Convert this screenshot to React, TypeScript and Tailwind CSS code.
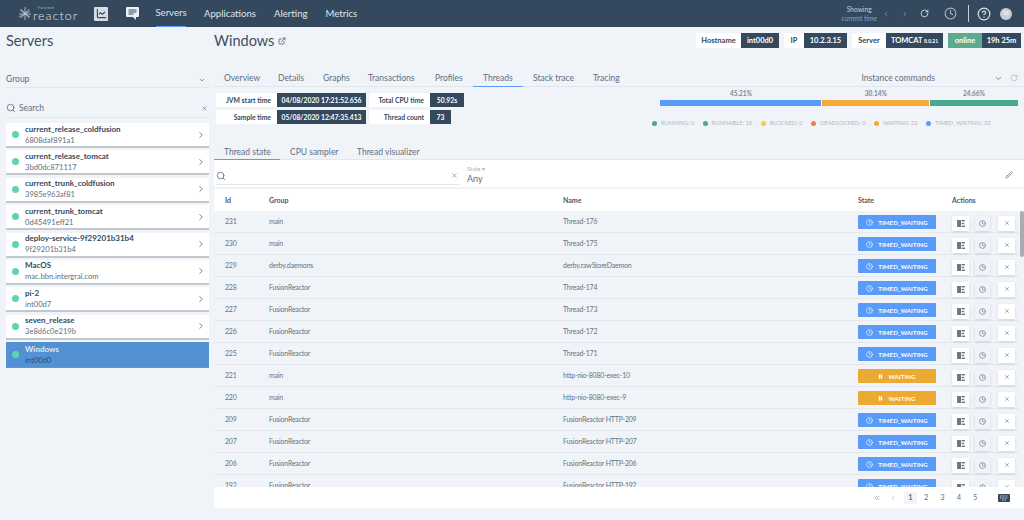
import React from 'react';
import {
  ChevronDown, ChevronLeft, ChevronRight, ChevronsLeft, Clock, ExternalLink, HelpCircle,
  Pause, RotateCw, Search, X, Brush, LineChart,
} from 'lucide-react';

const servers = [
  { name: 'current_release_coldfusion', id: '6808daf891a1' },
  { name: 'current_release_tomcat', id: '3bd0dc871117' },
  { name: 'current_trunk_coldfusion', id: '3985e963af81' },
  { name: 'current_trunk_tomcat', id: '0d45491eff21' },
  { name: 'deploy-service-9f29201b31b4', id: '9f29201b31b4' },
  { name: 'MacOS', id: 'mac.bbn.intergral.com' },
  { name: 'pi-2', id: 'int00d7' },
  { name: 'seven_release', id: '3e8d6c0e219b' },
];

const rows = [
  ['231', 'main', 'Thread-176', 'T'],
  ['230', 'main', 'Thread-175', 'T'],
  ['229', 'derby.daemons', 'derby.rawStoreDaemon', 'T'],
  ['228', 'FusionReactor', 'Thread-174', 'T'],
  ['227', 'FusionReactor', 'Thread-173', 'T'],
  ['226', 'FusionReactor', 'Thread-172', 'T'],
  ['225', 'FusionReactor', 'Thread-171', 'T'],
  ['221', 'main', 'http-nio-8080-exec-10', 'W'],
  ['220', 'main', 'http-nio-8080-exec-9', 'W'],
  ['209', 'FusionReactor', 'FusionReactor HTTP-209', 'T'],
  ['207', 'FusionReactor', 'FusionReactor HTTP-207', 'T'],
  ['206', 'FusionReactor', 'FusionReactor HTTP-206', 'T'],
  ['192', 'FusionReactor', 'FusionReactor HTTP-192', 'T'],
];

const legend = [
  ['RUNNING: 0', 'bg-[#46ab8c]'],
  ['RUNNABLE: 18', 'bg-[#46ab8c]'],
  ['BLOCKED: 0', 'bg-[#f7d038]'],
  ['DEADLOCKED: 0', 'bg-[#f07f4f]'],
  ['WAITING: 22', 'bg-[#f5a937]'],
  ['TIMED_WAITING: 33', 'bg-[#5b9bf8]'],
];

const mainTabs = [
  { label: 'Overview', cls: 'w-[64px] pl-[10px]' },
  { label: 'Details', cls: 'w-[45px]' },
  { label: 'Graphs', cls: 'w-[45px]' },
  { label: 'Transactions', cls: 'w-[67px]' },
  { label: 'Profiles', cls: 'w-[37px]' },
  { label: 'Threads', cls: 'ml-[1px] w-[50px] pl-[10px] border-b border-[#5b9bf8]' },
  { label: 'Stack trace', cls: 'ml-[10px] w-[60px]' },
  { label: 'Tracing', cls: 'w-[40px]' },
];

function Chip({ label, value, labelW, valueW }: { label: string; value: React.ReactNode; labelW: string; valueW: string }) {
  return (
    <div className="flex h-[15px] whitespace-nowrap text-[7.5px] font-bold leading-[15px]">
      <div className={`bg-white text-center text-[#34495e] ${labelW}`}>{label}</div>
      <div className={`bg-[#34495e] text-center text-white ${valueW}`}>{value}</div>
    </div>
  );
}

function Stat({ label, value, labelW, valueW }: { label: string; value: string; labelW: string; valueW: string }) {
  return (
    <div className="flex h-[14px] whitespace-nowrap text-[6.8px] font-bold leading-[14px]">
      <div className={`bg-white pr-[6px] text-right text-[#34495e] ${labelW}`}>{label}</div>
      <div className={`bg-[#34495e] text-center text-white ${valueW}`}>{value}</div>
    </div>
  );
}

function BarsIcon() {
  return (
    <svg width="8" height="7" viewBox="0 0 9 8" className="text-[#6a7686]" fill="currentColor">
      <rect x="0" y="0" width="4.5" height="8" />
      <rect x="5.2" y="0" width="3.8" height="1.6" />
      <rect x="5.2" y="3.2" width="3" height="1.6" />
      <rect x="5.2" y="6.4" width="3.8" height="1.6" />
    </svg>
  );
}

function ThreadRow({ row }: { row: string[] }) {
  const timed = row[3] === 'T';
  return (
    <div className="flex h-[22px] shrink-0 items-center whitespace-nowrap border-b border-[#e2e7ee] text-[7px] tracking-[-0.2px] text-[#68737f]">
      <div className="w-[55px] pl-[11px]">{row[0]}</div>
      <div className="w-[294px]">{row[1]}</div>
      <div className="w-[295px]">{row[2]}</div>
      <div
        className={`mt-px flex h-[14px] w-[78px] items-center justify-center gap-[5px] rounded-[1px] text-[6px] font-bold tracking-[0.1px] text-white ${
          timed ? 'bg-[#5b9bf8]' : 'bg-[#ecaa35]'
        }`}
      >
        {timed ? <Clock size={7} /> : <Pause size={5} fill="currentColor" />}
        {timed ? 'TIMED_WAITING' : 'WAITING'}
      </div>
      <div className="ml-[16px] mt-[3px] flex h-[15px] w-[17px] items-center justify-center bg-white shadow-sm">
        <BarsIcon />
      </div>
      <div className="ml-[6px] mt-[3px] flex h-[15px] w-[15px] items-center justify-center bg-[#f0f3f8] shadow-sm">
        <Clock size={7} className="text-[#5a6878]" />
      </div>
      <div className="ml-[8px] mt-[3px] flex h-[15px] w-[17px] items-center justify-center bg-white shadow-sm">
        <X size={6} className="text-[#5a6878]" />
      </div>
    </div>
  );
}

export default function App() {
  return (
    <div className="flex h-[520px] w-[1024px] flex-col overflow-hidden bg-[#f0f3f8] text-[#34495e] [font-family:Lato,sans-serif]">
      <header className="flex h-[27px] shrink-0 items-center bg-[#34495e] text-white">
        <div className="ml-[17px] flex w-[62px] items-center">
          <svg width="15" height="15" viewBox="0 0 15 15" className="shrink-0 text-[#c5ced8]" stroke="currentColor" strokeWidth="0.8">
            <path d="M8 1v13M2 8h12M4 3l8 9M12 3l-8 9M2 11l11-6M3 4l10 7" />
          </svg>
          <div className="ml-[1px] flex flex-col leading-none">
            <span className="ml-[5px] text-[4px] leading-[4px] tracking-[1px] text-[#c5ced8]">fusion</span>
            <span className="text-[12.5px] font-light leading-[11px] tracking-[1px] text-[#dfe5ea]">reactor</span>
          </div>
        </div>
        <div className="ml-[15px] flex h-[14px] w-[14px] items-center justify-center rounded-[1px] bg-[#d5dce4]">
          <LineChart size={11} strokeWidth={2.5} className="text-[#34495e]" />
        </div>
        <svg width="13" height="13" viewBox="0 0 13 13" className="ml-[18px] text-[#eef1f4]">
          <path d="M1 0h11a1 1 0 0 1 1 1v8a1 1 0 0 1-1 1h-2v3l-3-3H1a1 1 0 0 1-1-1V1a1 1 0 0 1 1-1z" fill="currentColor" />
          <path d="M2.5 3h8M2.5 5h8M2.5 7h5" stroke="#34495e" strokeWidth="1" />
        </svg>
        <nav className="ml-[17px] flex h-full items-center whitespace-nowrap pt-px text-[9.6px] text-[#dfe5ea]">
          <div className="flex h-full w-[30px] items-center justify-center border-b border-[#5b9bf8]">Servers</div>
          <div className="ml-[18px]">Applications</div>
          <div className="ml-[18px]">Alerting</div>
          <div className="ml-[18px]">Metrics</div>
        </nav>
        <div className="ml-auto flex items-center">
          <div className="flex flex-col items-center text-[6.6px] leading-[9px]">
            <span className="text-[#c5ced8]">Showing</span>
            <span className="text-[#8fa0b1]">current time</span>
          </div>
          <ChevronLeft size={8} className="ml-[5px] text-[#8fa0b1]" />
          <ChevronRight size={8} className="ml-[11px] text-[#8fa0b1]" />
          <RotateCw size={9} className="ml-[11px] text-[#eef1f4]" />
          <Clock size={13} className="ml-[15px] text-[#a9b5c1]" />
          <div className="ml-[11px] h-[17px] w-px bg-[#c5ced8]" />
          <HelpCircle size={14} className="ml-[8px] text-[#dfe5ea]" />
          <div className="ml-[9px] mr-[12px] flex h-[12px] w-[12px] items-center justify-center rounded-full bg-[#c8ced5] text-[5px] text-white">SS</div>
        </div>
      </header>

      <div className="flex min-h-0 flex-1 pl-[6px]">
        <aside className="w-[203px] shrink-0">
          <h1 className="mt-[4px] h-[20px] text-[14.5px] leading-[20px] text-[#3e5064]">Servers</h1>
          <div className="mt-[24px] flex h-[13px] items-center justify-between border-b border-[#e2e7ee] pb-[3px] pr-[3px] text-[8.5px] text-[#5f6f80]">
            Group
            <ChevronDown size={8} />
          </div>
          <div className="mt-[14px] flex h-[16px] items-center border-b border-[#e2e7ee] pb-[3px] pr-[1px] text-[8.5px] text-[#5f6f80]">
            <Search size={10} />
            <span className="ml-[3px]">Search</span>
            <X size={7} className="ml-auto" />
          </div>
          <div className="mt-[5px] flex flex-col">
            {servers.map((s) => (
              <div key={s.id} className="mb-[2.4px] flex h-[25px] items-center border-b-2 border-[#c3c8ce] bg-white">
                <span className="ml-[6px] h-[7px] w-[7px] rounded-full bg-[#5fd4ae]" />
                <div className="ml-[6px] flex-1 leading-[11px]">
                  <div className="text-[8px] font-bold text-[#34495e]">{s.name}</div>
                  <div className="text-[7.6px] text-[#5f6f80]">{s.id}</div>
                </div>
                <ChevronRight size={10} className="mr-[3px] text-[#5f6f80]" />
              </div>
            ))}
            <div className="flex h-[26px] items-center border-b border-[#7b8fa5] bg-[#5292d3]">
              <span className="ml-[6px] h-[7px] w-[7px] rounded-full bg-[#5fd4ae]" />
              <div className="ml-[6px] flex-1 leading-[11px]">
                <div className="text-[8px] font-bold text-[#dfe9f5]">Windows</div>
                <div className="text-[7.6px] text-[#34495e]">int00d0</div>
              </div>
            </div>
          </div>
        </aside>

        <main className="ml-[5px] flex min-w-0 flex-1 flex-col">
          <div className="flex h-[21px] items-end justify-between">
            <div className="-mb-[3px] flex items-center">
              <span className="text-[14.5px] leading-[20px] text-[#3e5064]">Windows</span>
              <ExternalLink size={8} className="ml-[4px]" />
            </div>
            <div className="mr-[3px] flex items-center gap-[5px]">
              <Chip label="Hostname" value="int00d0" labelW="w-[45px]" valueW="w-[38px]" />
              <Chip label="IP" value="10.2.3.15" labelW="w-[20px]" valueW="w-[43px]" />
              <Chip label="Server" value={<>TOMCAT <span className="text-[5px]">8.0.21</span></>} labelW="w-[34px]" valueW="w-[57px]" />
              <div className="flex h-[15px] whitespace-nowrap text-center text-[7.5px] font-bold leading-[15px] text-white">
                <div className="w-[34px] bg-[#5cab8e]">online</div>
                <div className="w-[39px] bg-[#34495e]">19h 25m</div>
              </div>
            </div>
          </div>

          <div className="mt-[23px] flex h-[16px] items-stretch justify-between border-b border-[#e2e7ee] pr-[5px] text-[8.5px] leading-[15px] text-[#5f6f80]">
            <div className="flex">
              {mainTabs.map((t) => (
                <div key={t.label} className={`-mb-px h-[16px] whitespace-nowrap ${t.cls}`}>
                  {t.label}
                </div>
              ))}
            </div>
            <div className="flex">
              <span>Instance commands</span>
              <ChevronDown size={9} className="ml-[59px] mt-[3px]" />
              <RotateCw size={8} className="ml-[7px] mr-[1px] mt-[3px] text-[#aab4bf]" />
            </div>
          </div>

          <div className="mt-[6px] flex h-[52px] justify-between pl-[2px]">
            <div className="flex gap-[3px]">
              <div className="flex flex-col gap-[3px]">
                <Stat label="JVM start time" value="04/08/2020 17:21:52.656" labelW="w-[61px]" valueW="w-[89px]" />
                <Stat label="Sample time" value="05/08/2020 12:47:35.413" labelW="w-[61px]" valueW="w-[89px]" />
              </div>
              <div className="flex flex-col gap-[3px]">
                <Stat label="Total CPU time" value="50.92s" labelW="w-[61px]" valueW="w-[34px]" />
                <Stat label="Thread count" value="73" labelW="w-[61px]" valueW="w-[21px]" />
              </div>
            </div>
            <div className="-mt-[3px] mr-[6px] flex w-[358px] flex-col">
              <div className="flex h-[8px] text-[6.5px] font-bold leading-[8px] text-[#7b8794]">
                <span className="w-[45.21%] text-center">45.21%</span>
                <span className="w-[30.14%] text-center">30.14%</span>
                <span className="w-[24.65%] text-center">24.66%</span>
              </div>
              <div className="mt-[2px] flex h-[6px] gap-px">
                <div className="w-[45.21%] bg-[#5b9bf8]" />
                <div className="w-[30.14%] bg-[#f5a937]" />
                <div className="w-[24.65%] bg-[#46ab8c]" />
              </div>
              <div className="-ml-[8px] mt-[13px] flex gap-[8.5px] whitespace-nowrap text-[5.8px] leading-[8px] text-[#b3b9c0]">
                {legend.map(([text, dot]) => (
                  <div key={text} className="flex items-center gap-[4px]">
                    <span className={`h-[5px] w-[5px] rounded-full ${dot}`} />
                    {text}
                  </div>
                ))}
              </div>
            </div>
          </div>

          <div className="flex h-[15px] whitespace-nowrap border-b border-[#e2e7ee] text-[8.5px] leading-[15px] text-[#5f6f80]">
            <div className="-mb-px h-[15px] w-[66px] border-b border-[#5b9bf8] pl-[10px]">Thread state</div>
            <div className="ml-[10px] w-[47px]">CPU sampler</div>
            <div className="ml-[20px]">Thread visualizer</div>
          </div>

          <div className="flex h-[27px] items-end bg-white pb-[1px] text-[#5f6f80]">
            <div className="mb-px ml-[2px] flex h-[18px] w-[243px] items-center border-b border-[#e2e7ee]">
              <Search size={10} />
              <X size={7} className="ml-auto mr-[1px]" />
            </div>
            <div className="ml-[8px] flex flex-col">
              <span className="text-[6px] leading-[7px] text-[#aab4bf]">State ▾</span>
              <span className="text-[9px] leading-[14px]">Any</span>
            </div>
            <Brush size={8} className="mb-[7px] ml-auto mr-[11px] text-[#7b8794]" />
          </div>

          <div className="mt-[2px] flex h-[22px] shrink-0 items-center bg-white text-[7px] font-bold text-[#4a5b6d]">
            <div className="w-[55px] pl-[11px]">Id</div>
            <div className="w-[294px]">Group</div>
            <div className="w-[295px]">Name</div>
            <div className="w-[94px]">State</div>
            <div>Actions</div>
          </div>

          <div className="relative flex h-[276px] shrink-0 flex-col overflow-hidden pr-[5px]">
            {rows.map((r) => (
              <ThreadRow key={r[0]} row={r} />
            ))}
            <div className="absolute right-0 top-0 h-[46px] w-[4px] rounded-full bg-[#a8adb3]" />
          </div>

          <div className="flex h-[21px] shrink-0 items-center bg-white text-[7.5px] text-[#5f6f80]">
            <ChevronsLeft size={8} className="ml-[659px] text-[#8e99a5]" />
            <ChevronLeft size={8} className="ml-[8px] text-[#b3b9c0]" />
            <div className="ml-[7px] flex h-[12px] w-[13px] items-center justify-center rounded-[1px] bg-[#f0f3f8] font-bold">1</div>
            <span className="ml-[7px]">2</span>
            <span className="ml-[12px]">3</span>
            <span className="ml-[12px]">4</span>
            <span className="ml-[12px]">5</span>
            <svg width="12" height="8" viewBox="0 0 12 8" className="ml-[21px] text-[#34495e]">
              <rect width="12" height="8" rx="1" fill="currentColor" />
              <path d="M2 2h8M2 4h8M4 6h4" stroke="#fff" strokeWidth="0.8" strokeDasharray="1 0.6" />
            </svg>
          </div>
        </main>
      </div>
    </div>
  );
}
